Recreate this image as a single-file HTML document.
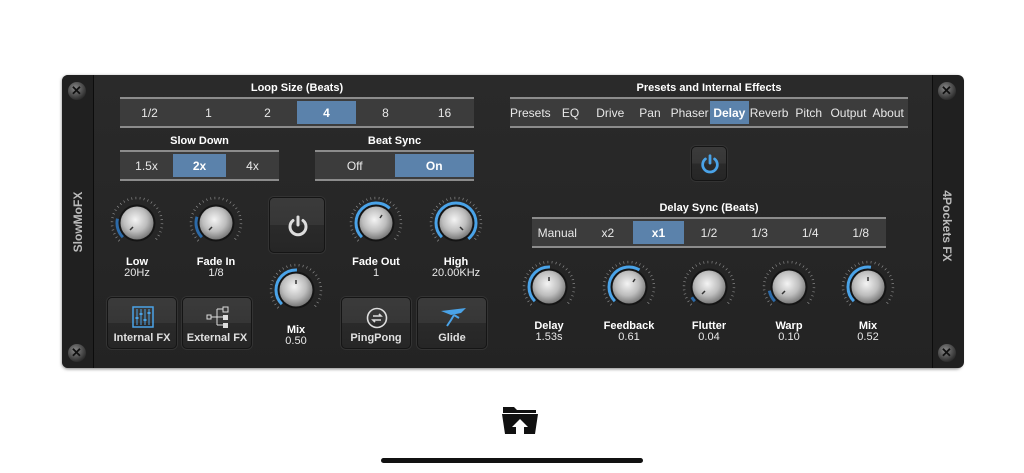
<!DOCTYPE html>
<html><head><meta charset="utf-8"><style>
body{margin:0;width:1024px;height:473px;background:#fff;position:relative;overflow:hidden;font-family:"Liberation Sans",Arial,sans-serif}
.a{position:absolute}
#panel{left:62px;top:75px;width:900px;height:293px;background:linear-gradient(180deg,#2a2a2a,#232323);border-radius:6px;box-shadow:0 1px 3px rgba(0,0,0,.5)}
.side{top:75px;width:31px;height:293px;background:#202020}
.t{color:#fff;font-size:11px;font-weight:bold;text-align:center}
.seg{display:flex;background:#3c3c3c;border-top:2px solid #8c8c8c;border-bottom:2px solid #8c8c8c;box-sizing:border-box}
.seg div{flex:1;color:#e8e8e8;font-size:12px;display:flex;align-items:center;justify-content:center;white-space:nowrap}
.seg div.s{background:#5b82ab;color:#fff;font-weight:bold;margin:2px 0}
.btn{border:1px solid #151515;border-radius:5px;background:linear-gradient(180deg,#3b3b3b 0,#363636 50%,#2a2a2a 50%,#262626 100%);box-sizing:border-box;box-shadow:0 0 0 1px #333}
.bl{color:#e0e0e0;font-size:11px;font-weight:bold;text-align:center;position:absolute;left:0;right:0;bottom:4px}
.kl{color:#e8e8e8;font-size:11px;text-align:center;line-height:11px;width:80px}
.kl b{color:#fff}
.screw{width:18px;height:18px;border-radius:50%;background:radial-gradient(circle at 40% 35%,#888,#2a2a2a 75%);}
.screw:after{content:"✕";position:absolute;left:3px;top:1px;font-size:13px;color:#111;font-weight:bold}
</style></head><body>
<svg width="0" height="0" style="position:absolute"><defs>
<radialGradient id="kg" cx="45%" cy="40%" r="60%"><stop offset="0" stop-color="#f4f4f4"/><stop offset=".6" stop-color="#bdbdbd"/><stop offset="1" stop-color="#7a7a7a"/></radialGradient>
<symbol id="knob" viewBox="-30 -30 60 60">
<path d="M-17.7 17.7A25 25 0 1 1 17.7 17.7" fill="none" stroke="#999" stroke-width="2.5" stroke-dasharray="0.6 3.5"/>
<circle r="18.5" fill="#151515"/>
<circle r="16.5" fill="url(#kg)"/>
</symbol></defs></svg>
<div id="panel" class="a"></div>
<div class="a side" style="left:62px;border-radius:6px 0 0 6px;border-right:1px solid #0c0c0c"></div>
<div class="a side" style="left:932px;border-radius:0 6px 6px 0;border-left:1px solid #0c0c0c"></div>
<div class="a screw" style="left:68px;top:82px"></div>
<div class="a screw" style="left:68px;top:344px"></div>
<div class="a screw" style="left:938px;top:82px"></div>
<div class="a screw" style="left:938px;top:344px"></div>
<div class="a" style="left:78px;top:222px;transform:translate(-50%,-50%) rotate(-90deg);color:#bbb;font-size:12px;font-weight:bold;white-space:nowrap">SlowMoFX</div>
<div class="a" style="left:947px;top:226px;transform:translate(-50%,-50%) rotate(90deg);color:#bbb;font-size:12px;font-weight:bold;white-space:nowrap">4Pockets FX</div>

<div class="a t" style="left:120px;width:354px;top:82px">Loop Size (Beats)</div>
<div class="a seg" style="left:120px;top:97px;width:354px;height:31px"><div>1/2</div><div>1</div><div>2</div><div class="s">4</div><div>8</div><div>16</div></div>
<div class="a t" style="left:120px;width:159px;top:135px">Slow Down</div>
<div class="a seg" style="left:120px;top:150px;width:159px;height:31px"><div>1.5x</div><div class="s">2x</div><div>4x</div></div>
<div class="a t" style="left:315px;width:159px;top:135px">Beat Sync</div>
<div class="a seg" style="left:315px;top:150px;width:159px;height:31px"><div>Off</div><div class="s">On</div></div>

<div class="a t" style="left:510px;width:398px;top:82px">Presets and Internal Effects</div>
<div class="a seg" style="left:510px;top:97px;width:398px;height:31px"><div>Presets</div><div>EQ</div><div>Drive</div><div>Pan</div><div>Phaser</div><div class="s">Delay</div><div>Reverb</div><div>Pitch</div><div>Output</div><div>About</div></div>
<div class="a t" style="left:532px;width:354px;top:202px">Delay Sync (Beats)</div>
<div class="a seg" style="left:532px;top:217px;width:354px;height:31px"><div>Manual</div><div>x2</div><div class="s">x1</div><div>1/2</div><div>1/3</div><div>1/4</div><div>1/8</div></div>

<div class="a btn" style="left:269px;top:197px;width:56px;height:56px"><svg class="a" style="left:16px;top:16px" width="24" height="24" viewBox="0 0 24 24"><path d="M7 6.5A8 8 0 1 0 17 6.5" fill="none" stroke="#ddd" stroke-width="3" stroke-linecap="round"/><path d="M12 3v8" stroke="#ddd" stroke-width="3" stroke-linecap="round"/></svg></div>
<div class="a btn" style="left:691px;top:146px;width:36px;height:35px"><svg class="a" style="left:7px;top:6px" width="22" height="22" viewBox="0 0 24 24"><path d="M7 6.5A8 8 0 1 0 17 6.5" fill="none" stroke="#4aa3e8" stroke-width="3" stroke-linecap="round"/><path d="M12 3v8" stroke="#4aa3e8" stroke-width="3" stroke-linecap="round"/></svg></div>

<svg class="a" style="left:0;top:0" width="1024" height="473">
<g transform="translate(137,223)"><use href="#knob" x="-30" y="-30" width="60" height="60"/><circle r="20" fill="none" stroke="#2c6aa8" stroke-width="3" stroke-dasharray="20 200" transform="rotate(135)"/><path d="M-4 4l-3 3" stroke="#333" stroke-width="1.5"/></g>
<g transform="translate(216,223)"><use href="#knob" x="-30" y="-30" width="60" height="60"/><circle r="20" fill="none" stroke="#2c6aa8" stroke-width="3" stroke-dasharray="22 200" transform="rotate(135)"/><path d="M-4 4l-3 3" stroke="#333" stroke-width="1.5"/></g>
<g transform="translate(376,223)"><use href="#knob" x="-30" y="-30" width="60" height="60"/><circle r="20" fill="none" stroke="#4aa3e8" stroke-width="3" stroke-dasharray="62 200" transform="rotate(135)"/><path d="M4 -5l2 -3" stroke="#333" stroke-width="1.5"/></g>
<g transform="translate(456,223)"><use href="#knob" x="-30" y="-30" width="60" height="60"/><circle r="20" fill="none" stroke="#4aa3e8" stroke-width="3" stroke-dasharray="96.6 200" transform="rotate(135)"/><path d="M4 4l3 3" stroke="#333" stroke-width="1.5"/></g>
<g transform="translate(296,290)"><use href="#knob" x="-30" y="-30" width="60" height="60"/><circle r="20" fill="none" stroke="#4aa3e8" stroke-width="3" stroke-dasharray="48 200" transform="rotate(135)"/><path d="M0 -6v-4" stroke="#333" stroke-width="1.5"/></g>
<g transform="translate(549,287)"><use href="#knob" x="-30" y="-30" width="60" height="60"/><circle r="20" fill="none" stroke="#4aa3e8" stroke-width="3" stroke-dasharray="48 200" transform="rotate(135)"/><path d="M0 -6v-4" stroke="#333" stroke-width="1.5"/></g>
<g transform="translate(629,287)"><use href="#knob" x="-30" y="-30" width="60" height="60"/><circle r="20" fill="none" stroke="#4aa3e8" stroke-width="3" stroke-dasharray="58 200" transform="rotate(135)"/><path d="M4 -5l2 -3" stroke="#333" stroke-width="1.5"/></g>
<g transform="translate(709,287)"><use href="#knob" x="-30" y="-30" width="60" height="60"/><circle r="20" fill="none" stroke="#2c6aa8" stroke-width="3" stroke-dasharray="5 200" transform="rotate(135)"/><path d="M-4 4l-3 3" stroke="#333" stroke-width="1.5"/></g>
<g transform="translate(789,287)"><use href="#knob" x="-30" y="-30" width="60" height="60"/><circle r="20" fill="none" stroke="#2c6aa8" stroke-width="3" stroke-dasharray="12 200" transform="rotate(135)"/><path d="M-4 4l-3 3" stroke="#333" stroke-width="1.5"/></g>
<g transform="translate(868,287)"><use href="#knob" x="-30" y="-30" width="60" height="60"/><circle r="20" fill="none" stroke="#4aa3e8" stroke-width="3" stroke-dasharray="50 200" transform="rotate(135)"/><path d="M0 -6v-4" stroke="#333" stroke-width="1.5"/></g>
</svg>
<div class="a kl" style="left:97px;top:257px"><b>Low</b><br>20Hz</div>
<div class="a kl" style="left:176px;top:257px"><b>Fade In</b><br>1/8</div>
<div class="a kl" style="left:336px;top:257px"><b>Fade Out</b><br>1</div>
<div class="a kl" style="left:416px;top:257px"><b>High</b><br>20.00KHz</div>
<div class="a kl" style="left:256px;top:325px"><b>Mix</b><br>0.50</div>
<div class="a kl" style="left:509px;top:321px"><b>Delay</b><br>1.53s</div>
<div class="a kl" style="left:589px;top:321px"><b>Feedback</b><br>0.61</div>
<div class="a kl" style="left:669px;top:321px"><b>Flutter</b><br>0.04</div>
<div class="a kl" style="left:749px;top:321px"><b>Warp</b><br>0.10</div>
<div class="a kl" style="left:828px;top:321px"><b>Mix</b><br>0.52</div>

<div class="a btn" style="left:107px;top:297px;width:70px;height:52px">
<svg class="a" style="left:24px;top:8px" width="22" height="22" viewBox="0 0 22 22"><rect x="1" y="1" width="20" height="20" fill="none" stroke="#4aa3e8" stroke-width="1.5"/><path d="M5 3v16M9 3v16M13 3v16M17 3v16" stroke="#4aa3e8" stroke-width="1"/><path d="M3.5 12h3M7.5 8h3M11.5 14h3M15.5 7h3" stroke="#4aa3e8" stroke-width="2"/></svg>
<div class="bl">Internal FX</div></div>
<div class="a btn" style="left:182px;top:297px;width:70px;height:52px">
<svg class="a" style="left:23px;top:8px" width="24" height="22" viewBox="0 0 24 22"><rect x="1" y="9" width="4" height="4" fill="none" stroke="#ddd"/><path d="M5 11h6M11 3v16M11 3h6M11 11h6M11 19h6" stroke="#ddd"/><rect x="17" y="1" width="5" height="5" fill="none" stroke="#ddd"/><rect x="17" y="9" width="5" height="5" fill="#ddd"/><rect x="17" y="17" width="5" height="5" fill="#ddd"/></svg>
<div class="bl">External FX</div></div>
<div class="a btn" style="left:341px;top:297px;width:70px;height:52px">
<svg class="a" style="left:24px;top:9px" width="22" height="22" viewBox="0 0 22 22"><circle cx="11" cy="11" r="9.5" fill="none" stroke="#ddd" stroke-width="1.6"/><path d="M7 9h8l-2-2M15 13H7l2 2" fill="none" stroke="#ddd" stroke-width="1.6"/></svg>
<div class="bl">PingPong</div></div>
<div class="a btn" style="left:417px;top:297px;width:70px;height:52px">
<svg class="a" style="left:21px;top:8px" width="28" height="22" viewBox="0 0 28 22"><path d="M2 5L27 2L22 7L12 9Z" fill="#4aa3e8"/><path d="M15 9l-3 5l-4 6M15 9l5 3" fill="none" stroke="#4aa3e8" stroke-width="2"/></svg>
<div class="bl">Glide</div></div>

<svg class="a" style="left:502px;top:403px" width="36" height="31" viewBox="0 0 36 31"><path d="M1 4h11l3 3h19v3H1z" fill="#111"/><path d="M0 11h36l-3 20H3z" fill="#111"/><path d="M18 16l-8 8h4v7h8v-7h4z" fill="#fff"/></svg>
<div class="a" style="left:381px;top:458px;width:262px;height:5px;background:#111;border-radius:3px"></div>
</body></html>
